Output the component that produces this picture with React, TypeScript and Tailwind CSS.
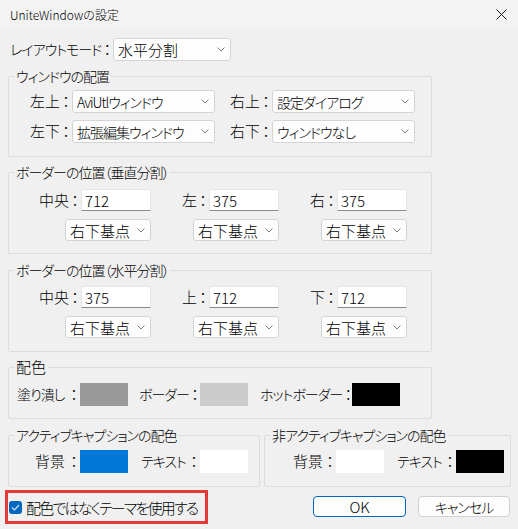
import React from 'react';

const FONT = 'font-["Noto_Sans_CJK_JP","Noto_Sans",sans-serif] font-light';
// katakana-heavy strings render wider than in the original UI font
const KANA = 'text-[14px] tracking-[-1px] [font-feature-settings:"palt"]';

function Chevron() {
  return (
    <svg width="8" height="5" viewBox="0 0 8 5" className="shrink-0">
      <path d="M0.5 0.5 L4 4 L7.5 0.5" fill="none" stroke="#808080" strokeWidth="1" />
    </svg>
  );
}

// "左上：" → text + a centred full-width colon
function Label({ text, kana, className = '' }: { text: string; kana?: boolean; className?: string }) {
  return (
    <span className={`flex items-center justify-between shrink-0 whitespace-nowrap ${className}`}>
      <span className={kana ? KANA : 'text-[15px]'}>{text.slice(0, -1)}</span>
      <span className="flex justify-center w-[12px] text-[15px]">：</span>
    </span>
  );
}

function Combo({ text, className, kana }: { text: string; className: string; kana?: boolean }) {
  return (
    <div
      className={`flex items-center justify-between shrink-0 bg-[#fdfdfd] border border-[#d4d4d4] rounded-[3px] pl-[4px] pr-[5px] leading-none whitespace-nowrap ${className}`}
    >
      <span className={kana ? KANA : 'text-[15px]'}>{text}</span>
      <Chevron />
    </div>
  );
}

function Edit({ value }: { value: string }) {
  return (
    <div className="flex items-center w-[70px] h-[22px] shrink-0 bg-white border border-[#e6e6e6] border-b-[#8a8a8a] pl-[3px] text-[15px] leading-none">
      {value}
    </div>
  );
}

function Group({
  title,
  className,
  titleClass = KANA,
  children,
}: {
  title: string;
  className: string;
  titleClass?: string;
  children: React.ReactNode;
}) {
  return (
    <div className={`relative shrink-0 border border-[#dcdcdc] rounded-[2px] ${className}`}>
      <span className={`absolute left-[5px] -top-[11px] px-[2px] bg-[#f0f0f0] leading-[20px] whitespace-nowrap ${titleClass}`}>
        {title}
      </span>
      {children}
    </div>
  );
}

function Swatch({ color }: { color: string }) {
  return <div className={`w-[48px] h-[23px] shrink-0 ${color}`} />;
}

function BorderColumn({ label, value }: { label: string; value: string }) {
  return (
    <div className="flex flex-col items-end gap-[8px]">
      <div className="flex items-center h-[22px]">
        <Label text={label} />
        <Edit value={value} />
      </div>
      <Combo text="右下基点" className="w-[86px] h-[22px]" />
    </div>
  );
}

function BorderGroup({
  title,
  cols,
  className,
}: {
  title: string;
  cols: { label: string; value: string }[];
  className: string;
}) {
  return (
    <Group title={title} className={`w-[424px] h-[82px] ${className}`}>
      <div className="grid grid-cols-[142px_128px_128px]">
        {cols.map((c) => (
          <BorderColumn key={c.label} label={c.label} value={c.value} />
        ))}
      </div>
    </Group>
  );
}

export default function App() {
  return (
    <div className={`w-[518px] h-[529px] bg-[#f0f0f0] overflow-hidden text-black ${FONT}`}>
      {/* Title bar */}
      <div className="flex items-center justify-between h-[29px] bg-[#f3f3f3] pl-[10px] pr-[11px]">
        <span className="text-[12px] leading-none">UniteWindowの設定</span>
        <svg width="11" height="11" viewBox="0 0 11 11">
          <path d="M0.5 0.5 L10.5 10.5 M10.5 0.5 L0.5 10.5" stroke="#1a1a1a" strokeWidth="1" />
        </svg>
      </div>

      <div className="px-[8px]">
        {/* Layout mode */}
        <div className="flex items-center h-[23px] mt-[9px]">
          <Label text="レイアウトモード：" kana className="w-[105px] pl-[2px] pr-[3px]" />
          <Combo text="水平分割" className="w-[118px] h-[23px]" />
        </div>

        {/* Window placement */}
        <Group title="ウィンドウの配置" className="w-[424px] h-[81px] mt-[15px] pt-[13px]">
          <div className="flex flex-col gap-[7px] pl-[21px]">
            <div className="flex items-center">
              <Label text="左上：" className="w-[42px]" />
              <Combo text="AviUtlウィンドウ" kana className="w-[143px] h-[23px]" />
              <Label text="右上：" className="w-[42px] ml-[15px]" />
              <Combo text="設定ダイアログ" kana className="w-[143px] h-[23px]" />
            </div>
            <div className="flex items-center">
              <Label text="左下：" className="w-[42px]" />
              <Combo text="拡張編集ウィンドウ" kana className="w-[143px] h-[23px]" />
              <Label text="右下：" className="w-[42px] ml-[15px]" />
              <Combo text="ウィンドウなし" kana className="w-[143px] h-[23px]" />
            </div>
          </div>
        </Group>

        <BorderGroup
          title="ボーダーの位置（垂直分割）"
          className="mt-[15px] pt-[16px]"
          cols={[
            { label: '中央：', value: '712' },
            { label: '左：', value: '375' },
            { label: '右：', value: '375' },
          ]}
        />

        <BorderGroup
          title="ボーダーの位置（水平分割）"
          className="mt-[16px] pt-[15px]"
          cols={[
            { label: '中央：', value: '375' },
            { label: '上：', value: '712' },
            { label: '下：', value: '712' },
          ]}
        />

        {/* Colors */}
        <Group title="配色" titleClass="text-[15px]" className="w-[424px] h-[52px] mt-[15px] pt-[15px]">
          <div className="flex items-center pl-[8px]">
            <Label text="塗り潰し：" kana className="w-[63px]" />
            <Swatch color="bg-[#999999]" />
            <Label text="ボーダー：" kana className="w-[61px] ml-[11px]" />
            <Swatch color="bg-[#cccccc]" />
            <Label text="ホットボーダー：" kana className="w-[92px] ml-[12px]" />
            <Swatch color="bg-black" />
          </div>
        </Group>

        {/* Caption colors */}
        <div className="flex mt-[16px]">
          <Group title="アクティブキャプションの配色" className="w-[252px] h-[52px] pt-[14px]">
            <div className="flex items-center pl-[26px]">
              <Label text="背景：" className="w-[45px]" />
              <Swatch color="bg-[#0078d7]" />
              <Label text="テキスト：" kana className="w-[59px] ml-[13px]" />
              <Swatch color="bg-white" />
            </div>
          </Group>
          <Group title="非アクティブキャプションの配色" className="w-[247px] h-[52px] ml-[4px] pt-[14px]">
            <div className="flex items-center pl-[28px]">
              <Label text="背景：" className="w-[43px]" />
              <Swatch color="bg-white" />
              <Label text="テキスト：" kana className="w-[59px] ml-[13px]" />
              <Swatch color="bg-black" />
            </div>
          </Group>
        </div>

        {/* Bottom row */}
        <div className="flex items-start mt-[3px]">
          <div className="flex items-center -ml-[3px] w-[203px] h-[34px] border-[3px] border-[#e53935] pl-[1px]">
            <div className="flex items-center justify-center w-[13px] h-[13px] rounded-[3px] bg-[#0067c0]">
              <svg width="9" height="7" viewBox="0 0 9 7">
                <path d="M1 3.5 L3.5 6 L8 1" fill="none" stroke="#d6e6f5" strokeWidth="1.2" />
              </svg>
            </div>
            <span className='ml-[4px] text-[15px] tracking-[-1.8px] [font-feature-settings:"palt"] leading-none whitespace-nowrap'>
              配色ではなくテーマを使用する
            </span>
          </div>
          <div className="flex gap-[12px] ml-auto mt-[6px]">
            <button className="w-[93px] h-[21px] bg-[#fdfdfd] border border-[#0067c0] rounded-[4px] text-[15px] leading-none">
              OK
            </button>
            <button className={`w-[92px] h-[21px] bg-[#fdfdfd] border border-[#d0d0d0] rounded-[4px] leading-none ${KANA}`}>
              キャンセル
            </button>
          </div>
        </div>
      </div>
    </div>
  );
}
